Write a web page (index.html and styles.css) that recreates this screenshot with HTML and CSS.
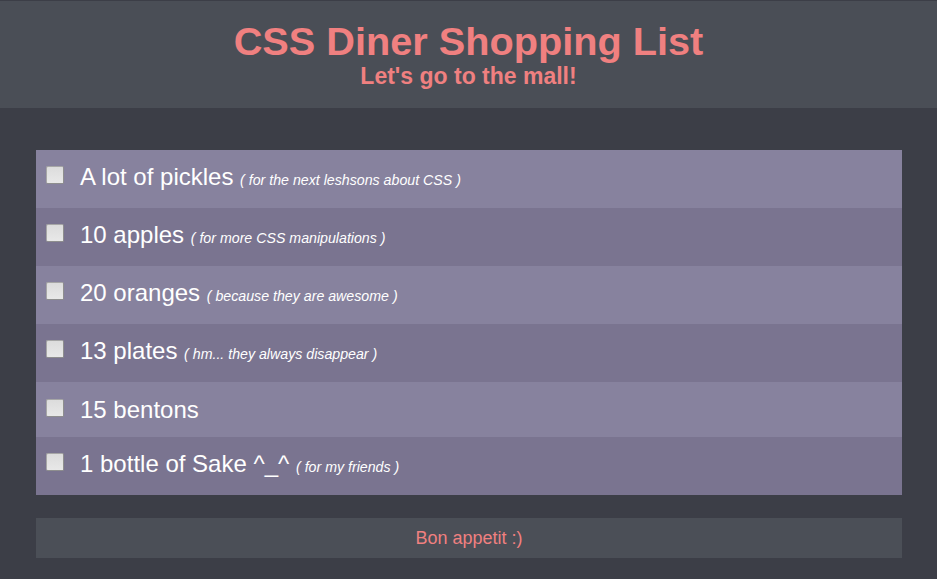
FILE: index.html
```html
<!DOCTYPE html>
<html>
<head>
<meta charset="utf-8">
<title>CSS Diner Shopping List</title>
<link rel="stylesheet" href="styles.css">
</head>
<body>
<header class="header">
  <h1 class="title">CSS Diner Shopping List</h1>
  <h2 class="subtitle">Let's go to the mall!</h2>
</header>
<ul class="list">
  <li class="item"><span class="box"></span><span class="name">A lot of pickles</span> <em class="note">( for the next leshsons about CSS )</em></li>
  <li class="item"><span class="box"></span><span class="name">10 apples</span> <em class="note">( for more CSS manipulations )</em></li>
  <li class="item"><span class="box"></span><span class="name">20 oranges</span> <em class="note">( because they are awesome )</em></li>
  <li class="item"><span class="box"></span><span class="name">13 plates</span> <em class="note">( hm... they always disappear )</em></li>
  <li class="item item-plain"><span class="box"></span><span class="name">15 bentons</span></li>
  <li class="item"><span class="box"></span><span class="name">1 bottle of Sake ^_^</span> <em class="note">( for my friends )</em></li>
</ul>
<footer class="footer">Bon appetit :)</footer>
</body>
</html>
```

FILE: styles.css
```css
html, body {
  margin: 0;
  padding: 0;
}
body {
  background: #3c3e47;
  font-family: "Liberation Sans", Arial, sans-serif;
  min-height: 579px;
  overflow: hidden;
}
.header {
  background: #4a4e56;
  border-top: 1px solid #3c3e47;
  padding: 20px 0 20px;
  text-align: center;
  color: #f08080;
}
.title {
  margin: 0 0 4px;
  font-size: 39.7px;
  line-height: 40px;
  font-weight: bold;
}
.subtitle {
  margin: 0;
  font-size: 23px;
  line-height: 23px;
  font-weight: bold;
}
.list {
  list-style: none;
  margin: 42px 35px 0 36px;
  padding: 0;
}
.item {
  background: #87829e;
  color: #ffffff;
  padding: 12px 0 16px 10px;
  font-size: 24px;
  line-height: 30px;
  white-space: nowrap;
}
.item:nth-child(even) {
  background: #7a7490;
}
.item-plain {
  padding-top: 13px;
  padding-bottom: 12px;
}
.box {
  display: inline-block;
  width: 16px;
  height: 16px;
  border: 1px solid #a6a6a6;
  border-right-color: #8e8e8e;
  border-bottom-color: #8e8e8e;
  background: linear-gradient(#dcdcdc, #e8e8e8);
  border-radius: 2px;
  margin-right: 16px;
  vertical-align: 1px;
}
.note {
  font-size: 14.2px;
  line-height: 14px;
  font-style: italic;
}
.footer {
  margin: 23px 35px 0 36px;
  height: 40px;
  line-height: 40px;
  background: #4b4f57;
  color: #f08080;
  text-align: center;
  font-size: 18px;
}
```
